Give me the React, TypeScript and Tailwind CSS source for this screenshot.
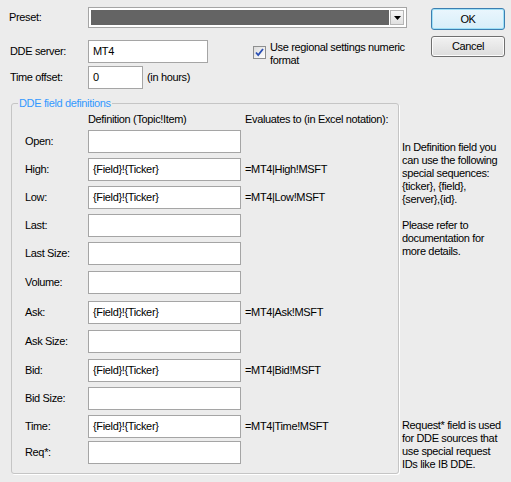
import { type ReactNode } from 'react';

function TextBox({ value, className = '' }: { value?: string; className?: string }) {
  return (
    <div
      className={`h-[23px] border border-[#a5a5a5] bg-white pl-[4px] flex items-center leading-[13px] ${className}`}
    >
      {value}
    </div>
  );
}

function Button({ children, isDefault }: { children: ReactNode; isDefault?: boolean }) {
  return (
    <div
      className={
        isDefault
          ? 'w-[74px] h-[22px] rounded-[3px] border border-[#3c7fb1] bg-gradient-to-b from-[#eaf6fd] to-[#d7eef9] shadow-[inset_0_0_0_1px_#9fe0f7] flex items-center justify-center'
          : 'w-[74px] h-[21px] rounded-[3px] border border-[#707070] bg-gradient-to-b from-[#f2f2f2] to-[#dddddd] shadow-[inset_0_0_0_1px_#fcfcfc] flex items-center justify-center'
      }
    >
      {children}
    </div>
  );
}

const rows = [
  { label: 'Open:', mt: 'mt-[4px]' },
  { label: 'High:', mt: 'mt-[5px]', def: '{Field}!{Ticker}', evaluated: '=MT4|High!MSFT' },
  { label: 'Low:', mt: 'mt-[5px]', def: '{Field}!{Ticker}', evaluated: '=MT4|Low!MSFT' },
  { label: 'Last:', mt: 'mt-[5px]' },
  { label: 'Last Size:', mt: 'mt-[5px]' },
  { label: 'Volume:', mt: 'mt-[6px]' },
  { label: 'Ask:', mt: 'mt-[7px]', def: '{Field}!{Ticker}', evaluated: '=MT4|Ask!MSFT' },
  { label: 'Ask Size:', mt: 'mt-[6px]' },
  { label: 'Bid:', mt: 'mt-[6px]', def: '{Field}!{Ticker}', evaluated: '=MT4|Bid!MSFT' },
  { label: 'Bid Size:', mt: 'mt-[5px]' },
  { label: 'Time:', mt: 'mt-[5px]', def: '{Field}!{Ticker}', evaluated: '=MT4|Time!MSFT' },
  { label: 'Req*:', mt: 'mt-[3px]' },
];

function Lines({ lines, className = '' }: { lines: string[]; className?: string }) {
  return (
    <div className={className}>
      {lines.map((line) => (
        <div key={line} className="whitespace-nowrap">
          {line}
        </div>
      ))}
    </div>
  );
}

export default function App() {
  return (
    <div className="w-[511px] h-[482px] overflow-hidden bg-[#ececec] text-[11px] leading-[13px] tracking-[-0.35px] text-black font-['Liberation_Sans',Arial,sans-serif]">
      {/* Top section */}
      <div className="flex">
        <div className="w-[424px]">
          {/* Preset */}
          <div className="flex items-center mt-[7px] h-[21px]">
            <div className="w-[88px] pl-[9px]">Preset:</div>
            <div className="w-[319px] h-[21px] border border-[#a5a5a5] bg-white p-[2px] flex">
              <div className="flex-1 bg-[#646464]" />
              <div className="w-[14px] ml-[1px] border border-[#b5b5b5] bg-gradient-to-b from-[#f7f7f7] to-[#e0e0e0] flex items-center justify-center">
                <svg width="7" height="4" viewBox="0 0 7 4">
                  <path d="M0 0h7L3.5 4z" fill="#000" />
                </svg>
              </div>
            </div>
          </div>

          {/* DDE server */}
          <div className="flex items-center mt-[12px] h-[22px]">
            <div className="w-[88px] pl-[10px]">DDE server:</div>
            <TextBox value="MT4" className="w-[120px] h-[22px]" />
            <div className="self-start mt-[1px] ml-[45px] flex">
              <div className="mt-[5px] w-[13px] h-[13px] border border-[#8e8f8f] bg-gradient-to-br from-[#dcdcdc] to-[#ffffff] flex items-center justify-center">
                <svg width="9" height="9" viewBox="0 0 9 9">
                  <path d="M1 4.5l2.2 2.5L8 1" fill="none" stroke="#2a4fb4" strokeWidth="1.8" />
                </svg>
              </div>
              <div className="ml-[4px] w-[145px]">Use regional settings numeric format</div>
            </div>
          </div>

          {/* Time offset */}
          <div className="flex items-center mt-[4px] h-[22px]">
            <div className="w-[88px] pl-[10px]">Time offset:</div>
            <TextBox value="0" className="w-[55px] h-[22px]" />
            <div className="ml-[4px]">(in hours)</div>
          </div>
        </div>

        <div className="ml-[7px] pt-[8px] flex flex-col gap-[6px]">
          <Button isDefault>OK</Button>
          <Button>Cancel</Button>
        </div>
      </div>

      {/* Bottom section */}
      <div className="flex mt-[9px]">
        <fieldset className="ml-[11px] w-[388px] h-[377px] border border-[#c5c5c5] rounded-[3px] shadow-[1px_1px_0_#ffffff] p-0 m-0 min-w-0">
          <legend className="ml-[6px] px-[1px] text-[#3399ff] leading-[13px]">DDE field definitions</legend>
          <div className="pl-[13px] pt-[3px]">
            <div className="flex h-[13px] whitespace-nowrap">
              <div className="w-[63px]" />
              <div className="w-[157px]">Definition (Topic!Item)</div>
              <div>Evaluates to (in Excel notation):</div>
            </div>
            {rows.map((row) => (
              <div key={row.label} className={`flex items-center h-[23px] ${row.mt}`}>
                <div className="w-[63px]">{row.label}</div>
                <TextBox value={row.def} className="w-[153px]" />
                <div className="ml-[4px] whitespace-nowrap">{row.evaluated}</div>
              </div>
            ))}
          </div>
        </fieldset>

        <div className="ml-[3px] w-[107px]">
          <Lines
            className="mt-[44px]"
            lines={[
              'In Definition field you',
              'can use the following',
              'special sequences:',
              '{ticker}, {field},',
              '{server},{id}.',
            ]}
          />
          <Lines className="mt-[13px]" lines={['Please refer to', 'documentation for', 'more details.']} />
          <Lines
            className="mt-[161px]"
            lines={['Request* field is used', 'for DDE sources that', 'use special request', 'IDs like IB DDE.']}
          />
        </div>
      </div>
    </div>
  );
}
